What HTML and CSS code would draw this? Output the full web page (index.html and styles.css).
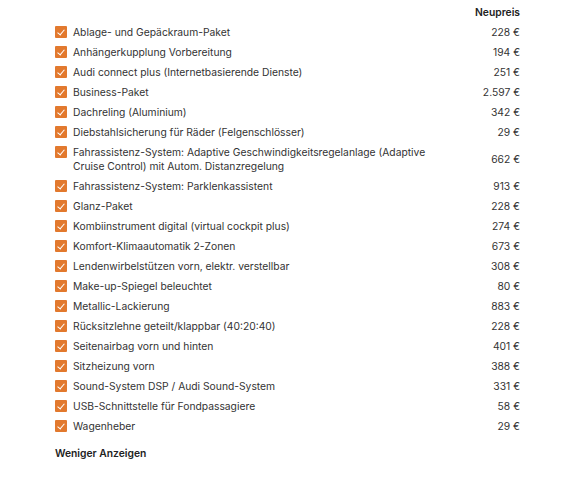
FILE: index.html
```html
<!DOCTYPE html>
<html lang="de">
<head>
<meta charset="utf-8">
<link rel="stylesheet" href="styles.css">
</head>
<body>
<div class="options">
  <div class="head"><span class="head-price">Neupreis</span></div>
  <ul class="list">
    <li class="row"><span class="box"></span><span class="label">Ablage- und Gepäckraum-Paket</span><span class="price">228 €</span></li>
    <li class="row"><span class="box"></span><span class="label">Anhängerkupplung Vorbereitung</span><span class="price">194 €</span></li>
    <li class="row"><span class="box"></span><span class="label">Audi connect plus (Internetbasierende Dienste)</span><span class="price">251 €</span></li>
    <li class="row"><span class="box"></span><span class="label">Business-Paket</span><span class="price">2.597 €</span></li>
    <li class="row"><span class="box"></span><span class="label">Dachreling (Aluminium)</span><span class="price">342 €</span></li>
    <li class="row"><span class="box"></span><span class="label">Diebstahlsicherung für Räder (Felgenschlösser)</span><span class="price">29 €</span></li>
    <li class="row"><span class="box"></span><span class="label">Fahrassistenz-System: Adaptive Geschwindigkeitsregelanlage (Adaptive Cruise Control) mit Autom. Distanzregelung</span><span class="price">662 €</span></li>
    <li class="row"><span class="box"></span><span class="label">Fahrassistenz-System: Parklenkassistent</span><span class="price">913 €</span></li>
    <li class="row"><span class="box"></span><span class="label">Glanz-Paket</span><span class="price">228 €</span></li>
    <li class="row"><span class="box"></span><span class="label">Kombiinstrument digital (virtual cockpit plus)</span><span class="price">274 €</span></li>
    <li class="row"><span class="box"></span><span class="label">Komfort-Klimaautomatik 2-Zonen</span><span class="price">673 €</span></li>
    <li class="row"><span class="box"></span><span class="label">Lendenwirbelstützen vorn, elektr. verstellbar</span><span class="price">308 €</span></li>
    <li class="row"><span class="box"></span><span class="label">Make-up-Spiegel beleuchtet</span><span class="price">80 €</span></li>
    <li class="row"><span class="box"></span><span class="label">Metallic-Lackierung</span><span class="price">883 €</span></li>
    <li class="row"><span class="box"></span><span class="label">Rücksitzlehne geteilt/klappbar (40:20:40)</span><span class="price">228 €</span></li>
    <li class="row"><span class="box"></span><span class="label">Seitenairbag vorn und hinten</span><span class="price">401 €</span></li>
    <li class="row"><span class="box"></span><span class="label">Sitzheizung vorn</span><span class="price">388 €</span></li>
    <li class="row"><span class="box"></span><span class="label">Sound-System DSP / Audi Sound-System</span><span class="price">331 €</span></li>
    <li class="row"><span class="box"></span><span class="label">USB-Schnittstelle für Fondpassagiere</span><span class="price">58 €</span></li>
    <li class="row"><span class="box"></span><span class="label">Wagenheber</span><span class="price">29 €</span></li>
  </ul>
  <div class="less">Weniger Anzeigen</div>
</div>
</body>
</html>
```
FILE: styles.css
```css
html, body {
  margin: 0;
  padding: 0;
  background: #fff;
}
body {
  font-family: Inter, "Noto Sans", sans-serif;
  font-size: 10.3px;
  color: #333;
}
.options {
  width: 465px;
  padding: 2px 0 0 55px;
}
.head {
  display: flex;
  justify-content: flex-end;
  height: 20px;
  align-items: center;
}
.head-price {
  font-weight: 600;
  color: #222;
}
.list {
  list-style: none;
  margin: 0;
  padding: 0;
}
.row {
  display: grid;
  grid-template-columns: 18px 366px 1fr;
  align-items: center;
  min-height: 20px;
  line-height: 14px;
}
.box {
  align-self: start;
  margin-top: 4px;
  width: 12px;
  height: 12px;
  background: #e2792e;
  border-radius: 1px;
  position: relative;
}
.box::after {
  content: "";
  position: absolute;
  left: 3.5px;
  top: 1.5px;
  width: 3px;
  height: 6px;
  border: solid #fff;
  border-width: 0 1.5px 1.5px 0;
  transform: rotate(40deg);
}
.label {
  padding: 3px 0;
}
.price {
  text-align: right;
}
.less {
  margin-top: 11px;
  font-weight: 600;
  color: #222;
}
```
